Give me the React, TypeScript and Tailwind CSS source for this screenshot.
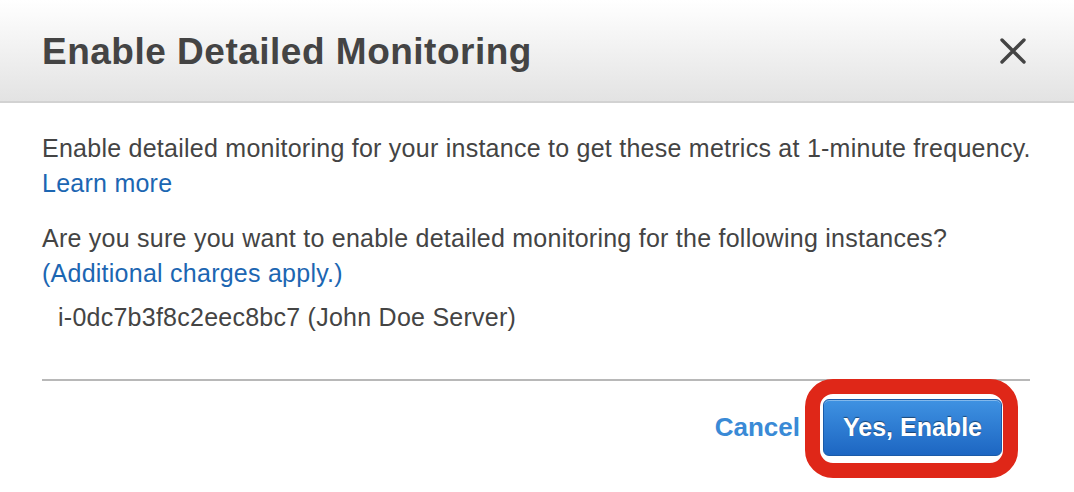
import React from 'react';

const font = { fontFamily: '"Liberation Sans", Arial, Helvetica, sans-serif' };

export default function App() {
  return (
    <div className="w-[1074px] h-[492px] bg-white overflow-hidden" style={font}>
      {/* Header */}
      <div className="h-[103px] flex items-center justify-between pl-[42px] pr-[48px] border-b-2 border-[#d2d2d2] bg-gradient-to-b from-white to-[#e3e3e3]">
        <h1 className="text-[37px] font-bold text-[#444444] tracking-[0.5px] pt-[2px]">
          Enable Detailed Monitoring
        </h1>
        <button className="text-[#444444]" aria-label="Close">
          <svg width="26" height="26" viewBox="0 0 26 26">
            <path d="M2 2 L24 24 M24 2 L2 24" stroke="currentColor" strokeWidth="3.4" strokeLinecap="round" />
          </svg>
        </button>
      </div>

      {/* Body */}
      <div className="px-[42px] pt-[28px] text-[25px] tracking-[0.25px] leading-[35px] text-[#444444]">
        <p>Enable detailed monitoring for your instance to get these metrics at 1-minute frequency.</p>
        <a className="block text-[#1c66b2]">Learn more</a>
        <p className="mt-[20px]">Are you sure you want to enable detailed monitoring for the following instances?</p>
        <a className="block text-[#1c66b2]">(Additional charges apply.)</a>
        <p className="mt-[9px] pl-[16px]">i-0dc7b3f8c2eec8bc7 (John Doe Server)</p>
      </div>

      {/* Footer */}
      <div className="mt-[44px] ml-[42px] mr-[44px] h-[2px] bg-[#b8b8b8]" />
      <div className="flex items-center justify-end gap-[23px] pt-[18px] pr-[72px]">
        <button className="text-[26px] font-bold text-[#3a8ad6]">Cancel</button>
        <div className="relative">
          <span className="absolute left-[-18px] right-[-16px] top-[-20px] bottom-[-22px] border-[15px] border-[#df2718] rounded-[28px]" />
          <button className="relative w-[179px] h-[57px] rounded-[6px] border border-[#1b5ba8] bg-gradient-to-b from-[#3f92e2] to-[#1d66c2] shadow-[inset_0_1px_0_rgba(255,255,255,0.35)] text-white text-[25px] font-bold [text-shadow:0_-1px_1px_rgba(0,0,0,0.45)]">
            Yes, Enable
          </button>
        </div>
      </div>
    </div>
  );
}
